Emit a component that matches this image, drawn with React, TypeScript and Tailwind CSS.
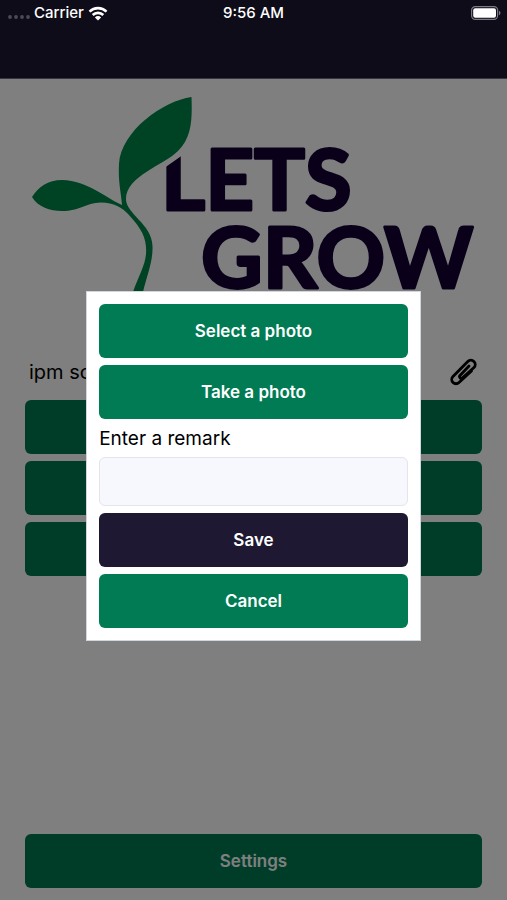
import { clsx } from "clsx";
import type { ButtonHTMLAttributes } from "react";

interface AppButtonProps extends ButtonHTMLAttributes<HTMLButtonElement> {
  dark?: boolean;
}

function AppButton({ dark, children, ...props }: AppButtonProps) {
  return (
    <button
      type="button"
      className={clsx(
        "h-[54px] w-full shrink-0 rounded-md pt-0.5 text-[17px] font-semibold text-white",
        dark ? "bg-[#1e1832]" : "bg-[#007b53]",
      )}
      {...props}
    >
      {children}
    </button>
  );
}

function WifiIcon() {
  return (
    <svg viewBox="0 0 20 15" className="h-[15px] w-5" aria-hidden="true">
      <g fill="none" stroke="#fff" strokeWidth="2.6">
        <path d="M1.5 5.6a12.2 12.2 0 0 1 17 0" />
        <path d="M4.7 9a7.6 7.6 0 0 1 10.6 0" />
      </g>
      <path d="M10 14.6 6.9 11.4a4.4 4.4 0 0 1 6.2 0z" fill="#fff" />
    </svg>
  );
}

function BatteryIcon() {
  return (
    <svg viewBox="0 0 30 14" className="h-[14px] w-[30px]" aria-hidden="true">
      <rect x="0.6" y="0.6" width="26" height="12.8" rx="3.6" fill="none" stroke="#7d7a86" strokeWidth="1.2" />
      <rect x="2.2" y="2.2" width="22.8" height="9.6" rx="2" fill="#fff" />
      <path d="M28 4.8c2 .8 2 3.6 0 4.4z" fill="#7d7a86" />
    </svg>
  );
}

function StatusBar() {
  return (
    <div className="absolute inset-x-0 top-0 z-20 grid h-[26px] grid-cols-3 items-center px-2 text-[15px] font-medium text-white">
      <div className="flex items-center gap-1">
        <svg viewBox="0 0 22 4" className="mt-2 h-1 w-[22px]" fill="#4d4a56" aria-hidden="true">
          <circle cx="2" cy="2" r="1.9" />
          <circle cx="8" cy="2" r="1.9" />
          <circle cx="14" cy="2" r="1.9" />
          <circle cx="20" cy="2" r="1.9" />
        </svg>
        <span>Carrier</span>
        <WifiIcon />
      </div>
      <time className="text-center">9:56 AM</time>
      <div className="-mr-0.5 flex justify-end">
        <BatteryIcon />
      </div>
    </div>
  );
}

function Logo() {
  return (
    <svg viewBox="25 91 457 254" className="w-full" role="img" aria-label="Lets Grow">
      <g
        fill="#140034"
        stroke="#140034"
        strokeWidth="3"
        strokeLinejoin="round"
        fontFamily="Lato, sans-serif"
        fontWeight="700"
        fontSize="85"
      >
        <text x="161" y="210">LETS</text>
        <text x="201" y="288">GROW</text>
      </g>
      {/* slanted cut where the leaf passes the L */}
      <path d="M160 171 L187 152 L187 140 L160 140z" fill="#fff" />
      <path
        d="M191.500 97C163 101 121 131 119 164C118 182 121 192 122 205C106 198 88 181 62 180C48 180 38 187 32 197C38 207 50 211 62 211C80 211 85 203 101 202.500C114 203 122 207 129 215C143 230 147 240 146 254C145 266 138 277 133 292L130 302H141L143 292C147 275 153 262 152.500 246C152 224 126 214 126 199C126 176 164 165 178 151C193 137 192 115 191.500 97z"
        fill="#008449"
      />
    </svg>
  );
}

function PaperclipIcon() {
  return (
    <svg
      viewBox="0 0 28 30"
      className="h-[30px] w-7"
      fill="none"
      stroke="#000"
      strokeWidth="2.800"
      strokeLinecap="round"
      strokeLinejoin="round"
      aria-hidden="true"
    >
      <path d="M20 9 11 18.500a1.700 1.700 0 0 0 2.500 2.300L25 10.500a4.200 4.200 0 0 0-6.200-6L4 19.500a4.200 4.200 0 0 0 6 6L22.500 14" />
    </svg>
  );
}

function RemarkDialog() {
  return (
    <div className="absolute inset-0 z-10 flex items-center justify-center bg-black/50 pt-8">
      <form
        role="dialog"
        aria-label="Add attachment"
        className="flex w-[66%] flex-col gap-[7px] border border-gray-300 bg-white p-3"
      >
        <AppButton>Select a photo</AppButton>
        <AppButton>Take a photo</AppButton>
        <label htmlFor="remark" className="pt-0.5 text-[19px] leading-[22px] text-black">
          Enter a remark
        </label>
        <input
          id="remark"
          type="text"
          className="h-[49px] w-full rounded-md border border-[#e4e4ec] bg-[#f7f8fd] px-3 text-[17px]"
        />
        <AppButton dark>Save</AppButton>
        <AppButton>Cancel</AppButton>
      </form>
    </div>
  );
}

const observations = ["First observation", "Second observation", "Third observation"];

export default function App() {
  return (
    <div className="relative flex min-h-screen flex-col bg-white font-['Inter',sans-serif]">
      <StatusBar />
      <header className="h-[79px] border-b border-[#6f6a86] bg-[#1e1832]" />
      <main className="flex flex-1 flex-col px-[25px] py-3">
        <Logo />
        <div className="mb-0.5 flex h-[53px] items-center justify-between pr-[5px] pl-1">
          <span className="text-[20px] text-black">ipm scout</span>
          <button type="button" aria-label="Attach">
            <PaperclipIcon />
          </button>
        </div>
        <div className="flex flex-col gap-[7px]">
          {observations.map((name) => (
            <AppButton key={name} aria-label={name} />
          ))}
        </div>
        <div className="mt-auto flex pt-3">
          <AppButton>Settings</AppButton>
        </div>
      </main>
      <RemarkDialog />
    </div>
  );
}
